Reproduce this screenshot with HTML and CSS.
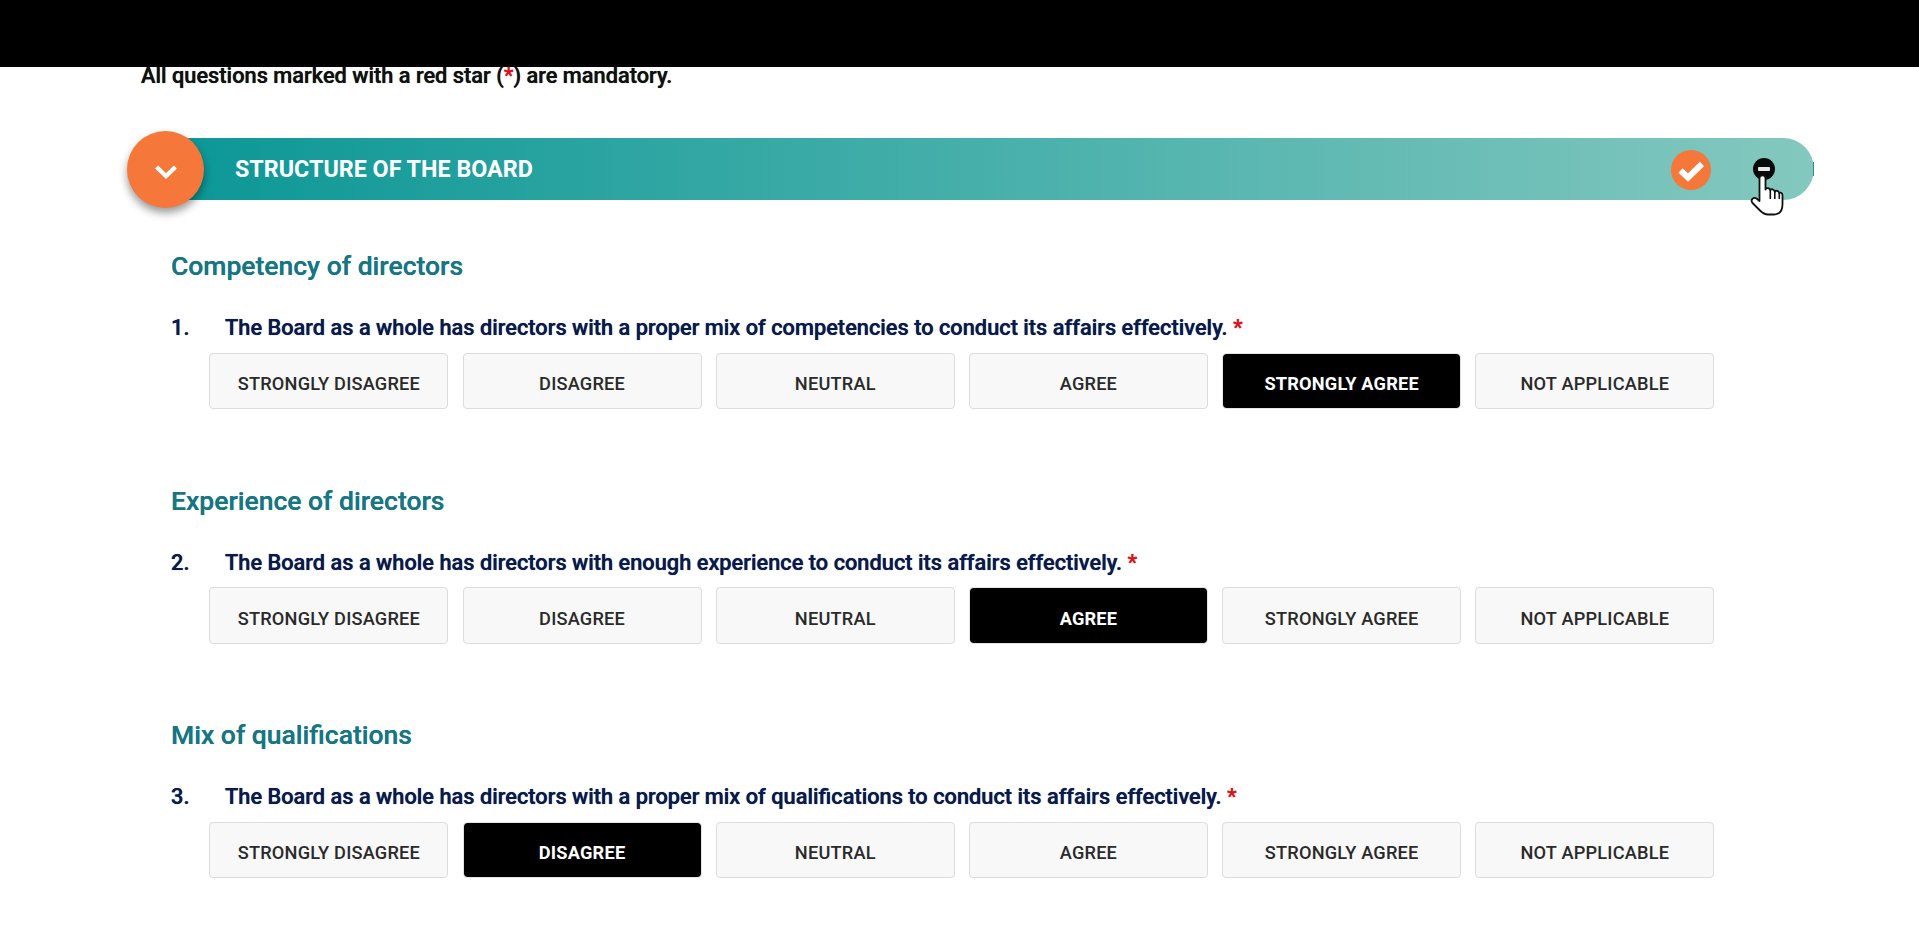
FILE: index.html
```html
<!DOCTYPE html>
<html lang="en">
<head>
<meta charset="utf-8">
<title>Board evaluation</title>
<link rel="stylesheet" href="styles.css">
</head>
<body>
<div class="topbar"></div>
<main class="page">
  <p class="notice">All questions marked with a red star (<span class="star">*</span>) are mandatory.</p>

  <header class="section-bar">
    <span class="toggle">
      <svg class="chevron" viewBox="0 0 24 16" width="24" height="16"><path d="M2.500 3 12 12 21.500 3" fill="none" stroke="#fff" stroke-width="4.400"/></svg>
    </span>
    <h1 class="section-title">STRUCTURE OF THE BOARD</h1>
    <span class="done">
      <svg viewBox="0 0 40 40" width="40" height="40"><path d="M9.500 20.500 17 27.500 31 14" fill="none" stroke="#fff" stroke-width="6"/></svg>
    </span>
    <span class="collapse"><span class="collapse-dash"></span></span>
    <svg class="hand" viewBox="0 0 34 42" width="34" height="42">
      <path d="M9.500 27V4C9.500 0.500 15.500 0.500 15.500 4V15.500C16 13.500 20 13.500 20.300 16.500C20.800 14.500 24.500 14.800 24.800 18C25.300 16 29 16.500 29.300 19.500C29.800 17.800 32.500 18.500 32.500 21.500V30C32.500 36 30 40.500 24 40.500H18C14.500 40.500 12.500 39 10 36.500L2.500 29C0 26 3.500 22.500 6.500 24.500Z" fill="#fff" stroke="#111" stroke-width="1.800" stroke-linejoin="round"/>
      <path d="M20.300 16.500V25M24.800 18V25M29.300 19.500V25" fill="none" stroke="#111" stroke-width="1.600"/>
    </svg>
  </header>

  <section class="group">
    <h2 class="group-title">Competency of directors</h2>
    <p class="question"><span class="num">1.</span>The Board as a whole has directors with a proper mix of competencies to conduct its affairs effectively. <span class="star">*</span></p>
    <div class="options">
      <button class="opt">STRONGLY DISAGREE</button>
      <button class="opt">DISAGREE</button>
      <button class="opt">NEUTRAL</button>
      <button class="opt">AGREE</button>
      <button class="opt selected">STRONGLY AGREE</button>
      <button class="opt">NOT APPLICABLE</button>
    </div>
  </section>

  <section class="group">
    <h2 class="group-title">Experience of directors</h2>
    <p class="question"><span class="num">2.</span>The Board as a whole has directors with enough experience to conduct its affairs effectively. <span class="star">*</span></p>
    <div class="options">
      <button class="opt">STRONGLY DISAGREE</button>
      <button class="opt">DISAGREE</button>
      <button class="opt">NEUTRAL</button>
      <button class="opt selected">AGREE</button>
      <button class="opt">STRONGLY AGREE</button>
      <button class="opt">NOT APPLICABLE</button>
    </div>
  </section>

  <section class="group">
    <h2 class="group-title">Mix of qualifications</h2>
    <p class="question"><span class="num">3.</span>The Board as a whole has directors with a proper mix of qualifications to conduct its affairs effectively. <span class="star">*</span></p>
    <div class="options">
      <button class="opt">STRONGLY DISAGREE</button>
      <button class="opt selected">DISAGREE</button>
      <button class="opt">NEUTRAL</button>
      <button class="opt">AGREE</button>
      <button class="opt">STRONGLY AGREE</button>
      <button class="opt">NOT APPLICABLE</button>
    </div>
  </section>
</main>
</body>
</html>
```
FILE: styles.css
```css
* { box-sizing: border-box; }
html, body { margin: 0; height: 100%; overflow: hidden; background: #fff; }
body { font-family: Roboto, "Liberation Sans", sans-serif; }

.topbar { height: 67px; background: #000; }

.page { padding: 0 105px 0 127px; }

.notice {
  margin: 0 0 0 14px;
  height: 71px;
  font-size: 21.8px;
  font-weight: 500;
  line-height: 17px;
  color: #111;
  white-space: nowrap;
  text-shadow: 0 0 .7px currentColor;
}
.star { color: #d9141c; }

.section-bar {
  position: relative;
  display: flex;
  align-items: center;
  height: 62px;
  margin-left: 38px;
  padding-left: 70px;
  border-radius: 0 31px 31px 0;
  background: linear-gradient(90deg, #0b9796 0%, #84c8bf 100%);
}
.section-bar::after {
  content: "";
  position: absolute;
  right: 0;
  top: 24px;
  width: 1.5px;
  height: 14px;
  background: #2a8f8a;
}
.toggle {
  position: absolute;
  left: -38px;
  top: -7px;
  display: flex;
  align-items: center;
  justify-content: center;
  width: 77px;
  height: 77px;
  border-radius: 50%;
  background: #f5773a;
  box-shadow: 0 5px 9px rgba(0, 0, 0, .4);
}
.chevron { margin-top: 5px; }
.section-title {
  margin: 0;
  flex: 1;
  font-size: 23.3px;
  font-weight: 700;
  color: #fff;
}
.done {
  display: flex;
  width: 40px;
  height: 40px;
  margin-top: 2px;
  border-radius: 50%;
  background: #f5773a;
}
.collapse {
  display: flex;
  align-items: center;
  justify-content: center;
  width: 22px;
  height: 22px;
  margin: 0 39px 0 42px;
  border-radius: 50%;
  background: #0a0a0a;
}
.collapse-dash { width: 12px; height: 4px; background: #e8e8e8; border-radius: 1px; }
.hand { position: absolute; right: 30px; top: 36px; }

.group { margin-left: 44px; height: 234.6px; padding-top: 51px; }

.group-title {
  margin: 0;
  height: 65px;
  font-size: 26.5px;
  font-weight: 500;
  line-height: 30px;
  color: #187683;
  text-shadow: 0 0 .5px currentColor;
}
.question {
  margin: 0;
  height: 36.500px;
  font-size: 21.8px;
  font-weight: 500;
  line-height: 24px;
  color: #0b1a4a;
  white-space: nowrap;
  text-shadow: 0 0 .7px currentColor;
}
.num { display: inline-block; width: 54px; }

.options {
  display: grid;
  grid-template-columns: repeat(6, 239px);
  column-gap: 14.2px;
  margin-left: 38.4px;
}
.opt {
  height: 56.5px;
  padding: 6px 0 0;
  border: 1px solid #dcdcdc;
  border-radius: 4px;
  background: #f8f8f8;
  font-family: inherit;
  font-size: 18.2px;
  font-weight: 500;
  color: #2a2a2a;
  letter-spacing: .2px;
}
.opt.selected { background: #000; background-clip: padding-box; border-color: #e4e4e4; color: #fff; font-weight: 700; }
```
